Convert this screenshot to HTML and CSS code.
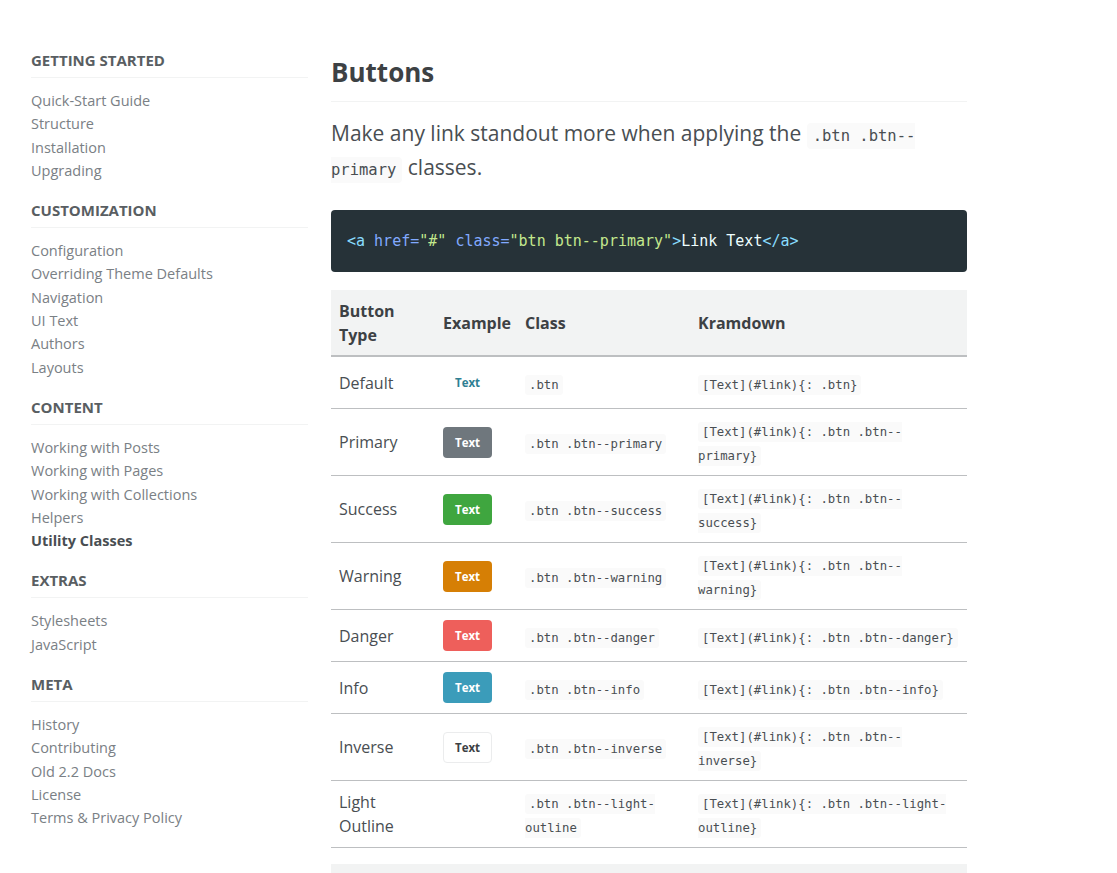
FILE: index.html
```html
<!DOCTYPE html>
<html lang="en">
<head>
<meta charset="utf-8">
<title>Buttons - Utility Classes</title>
<link rel="stylesheet" href="styles.css">
</head>
<body>
<div class="page">
  <nav class="sidebar">
    <div class="nav-group">
      <h3 class="nav-title">Getting Started</h3>
      <ul class="nav-list">
        <li><a href="#">Quick-Start Guide</a></li>
        <li><a href="#">Structure</a></li>
        <li><a href="#">Installation</a></li>
        <li><a href="#">Upgrading</a></li>
      </ul>
    </div>
    <div class="nav-group">
      <h3 class="nav-title">Customization</h3>
      <ul class="nav-list">
        <li><a href="#">Configuration</a></li>
        <li><a href="#">Overriding Theme Defaults</a></li>
        <li><a href="#">Navigation</a></li>
        <li><a href="#">UI Text</a></li>
        <li><a href="#">Authors</a></li>
        <li><a href="#">Layouts</a></li>
      </ul>
    </div>
    <div class="nav-group">
      <h3 class="nav-title">Content</h3>
      <ul class="nav-list">
        <li><a href="#">Working with Posts</a></li>
        <li><a href="#">Working with Pages</a></li>
        <li><a href="#">Working with Collections</a></li>
        <li><a href="#">Helpers</a></li>
        <li><a href="#" class="active">Utility Classes</a></li>
      </ul>
    </div>
    <div class="nav-group">
      <h3 class="nav-title">Extras</h3>
      <ul class="nav-list">
        <li><a href="#">Stylesheets</a></li>
        <li><a href="#">JavaScript</a></li>
      </ul>
    </div>
    <div class="nav-group">
      <h3 class="nav-title">Meta</h3>
      <ul class="nav-list">
        <li><a href="#">History</a></li>
        <li><a href="#">Contributing</a></li>
        <li><a href="#">Old 2.2 Docs</a></li>
        <li><a href="#">License</a></li>
        <li><a href="#">Terms &amp; Privacy Policy</a></li>
      </ul>
    </div>
  </nav>

  <main class="content">
    <h2 class="title">Buttons</h2>
    <p class="lead">Make any link standout more when applying the <code class="inline">.btn .btn--primary</code> classes.</p>

    <pre class="codeblock"><code><span class="c-tag">&lt;a</span> <span class="c-attr">href=</span><span class="c-str">"#"</span> <span class="c-attr">class=</span><span class="c-str">"btn btn--primary"</span><span class="c-tag">&gt;</span><span class="c-txt">Link Text</span><span class="c-tag">&lt;/a&gt;</span></code></pre>

    <table class="btn-table">
      <colgroup>
        <col class="col-type">
        <col class="col-example">
        <col class="col-class">
        <col class="col-kram">
      </colgroup>
      <thead>
        <tr>
          <th>Button Type</th>
          <th>Example</th>
          <th>Class</th>
          <th>Kramdown</th>
        </tr>
      </thead>
      <tbody>
        <tr>
          <td>Default</td>
          <td><a href="#" class="btn">Text</a></td>
          <td><code>.btn</code></td>
          <td><code>[Text](#link){: .btn}</code></td>
        </tr>
        <tr>
          <td>Primary</td>
          <td><a href="#" class="btn btn--primary">Text</a></td>
          <td><code>.btn .btn--primary</code></td>
          <td><code>[Text](#link){: .btn .btn--primary}</code></td>
        </tr>
        <tr>
          <td>Success</td>
          <td><a href="#" class="btn btn--success">Text</a></td>
          <td><code>.btn .btn--success</code></td>
          <td><code>[Text](#link){: .btn .btn--success}</code></td>
        </tr>
        <tr>
          <td>Warning</td>
          <td><a href="#" class="btn btn--warning">Text</a></td>
          <td><code>.btn .btn--warning</code></td>
          <td><code>[Text](#link){: .btn .btn--warning}</code></td>
        </tr>
        <tr>
          <td>Danger</td>
          <td><a href="#" class="btn btn--danger">Text</a></td>
          <td><code>.btn .btn--danger</code></td>
          <td><code>[Text](#link){: .btn .btn--danger}</code></td>
        </tr>
        <tr>
          <td>Info</td>
          <td><a href="#" class="btn btn--info">Text</a></td>
          <td><code>.btn .btn--info</code></td>
          <td><code>[Text](#link){: .btn .btn--info}</code></td>
        </tr>
        <tr>
          <td>Inverse</td>
          <td><a href="#" class="btn btn--inverse">Text</a></td>
          <td><code>.btn .btn--inverse</code></td>
          <td><code>[Text](#link){: .btn .btn--inverse}</code></td>
        </tr>
        <tr>
          <td>Light Outline</td>
          <td><a href="#" class="btn btn--light-outline">Text</a></td>
          <td><code>.btn .btn--light-outline</code></td>
          <td><code>[Text](#link){: .btn .btn--light-outline}</code></td>
        </tr>
      </tbody>
    </table>

    <div class="next-table"></div>
  </main>
</div>
</body>
</html>
```

FILE: styles.css
```css
html, body {
  margin: 0;
  padding: 0;
  background: #fff;
}

body {
  font-family: "Open Sans", "Noto Sans", sans-serif;
  color: #494e52;
}

.page {
  display: flex;
  gap: 23px;
  padding: 50px 0 0 31px;
}

/* Sidebar */
.sidebar {
  width: 277px;
  flex: none;
}

.nav-group {
  margin-bottom: 18px;
}

.nav-title {
  margin: 0;
  padding-bottom: 7px;
  border-bottom: 1px solid #f2f3f3;
  font-size: 15px;
  line-height: 20px;
  font-weight: 700;
  text-transform: uppercase;
  color: #595e62;
}

.nav-list {
  list-style: none;
  margin: 11px 0 0;
  padding: 0;
}

.nav-list li {
  font-size: 14.5px;
  line-height: 23.3px;
}

.nav-list a {
  color: #7a8085;
  text-decoration: none;
  font-weight: 400;
}

.nav-list a.active {
  color: #494e52;
  font-weight: 700;
}

/* Main */
.content {
  width: 636px;
  flex: none;
}

.title {
  margin: 6px 0 0;
  padding-bottom: 12px;
  border-bottom: 1px solid #f2f3f3;
  font-size: 26px;
  line-height: 33px;
  font-weight: 700;
  color: #3d4144;
}

.lead {
  margin: 14px 0 26px;
  font-size: 21px;
  line-height: 34px;
  color: #494e52;
}

code {
  font-family: "DejaVu Sans Mono", "Liberation Mono", monospace;
}

.inline {
  font-size: 15.5px;
  line-height: 1;
  background: #fafafa;
  padding: 4px 6px;
  border-radius: 4px;
  color: #494e52;
}

.codeblock {
  margin: 0 0 18px;
  padding: 16px;
  background: #263238;
  border-radius: 4px;
  font-size: 15px;
  line-height: 30px;
}

.codeblock code {
  font-family: "DejaVu Sans Mono", "Liberation Mono", monospace;
}

.c-tag { color: #89ddff; }
.c-attr { color: #82aaff; }
.c-str { color: #c3e88d; }
.c-txt { color: #eeffff; }

/* Table */
.btn-table {
  width: 636px;
  border-collapse: collapse;
  table-layout: fixed;
}

.col-type { width: 104px; }
.col-example { width: 82px; }
.col-class { width: 173px; }
.col-kram { width: 277px; }

.btn-table thead th {
  background: #f2f3f3;
  text-align: left;
  font-size: 16px;
  line-height: 24px;
  font-weight: 700;
  color: #3d4144;
  padding: 9px 8px 8px;
  border-bottom: 2px solid #bdbfc1;
  vertical-align: middle;
}

.btn-table td {
  padding: 9px 8px;
  font-size: 16px;
  line-height: 24px;
  color: #494e52;
  border-bottom: 1px solid #bdbfc1;
  vertical-align: middle;
}

.btn-table td code {
  font-size: 12.3px;
  line-height: 1;
  background: #fafafa;
  padding: 3px 4px;
  border-radius: 3px;
  color: #494e52;
}

.btn {
  display: inline-block;
  vertical-align: middle;
  margin: 1px 0;
  padding: 6px 11px;
  font-size: 11.5px;
  line-height: 17px;
  font-weight: 700;
  border: 1px solid transparent;
  border-radius: 4px;
  text-decoration: none;
  color: #2f7f93;
}

.btn--primary { background: #6f777d; color: #fff; }
.btn--success { background: #3fa63f; color: #fff; }
.btn--warning { background: #d67f05; color: #fff; }
.btn--danger { background: #ee5f5b; color: #fff; }
.btn--info { background: #3b9cba; color: #fff; }
.btn--inverse { background: #fff; color: #3d4144; border-color: #ebeced; }
.btn--light-outline { display: none; }

.next-table {
  margin-top: 16px;
  height: 40px;
  background: #f2f3f3;
}
```
